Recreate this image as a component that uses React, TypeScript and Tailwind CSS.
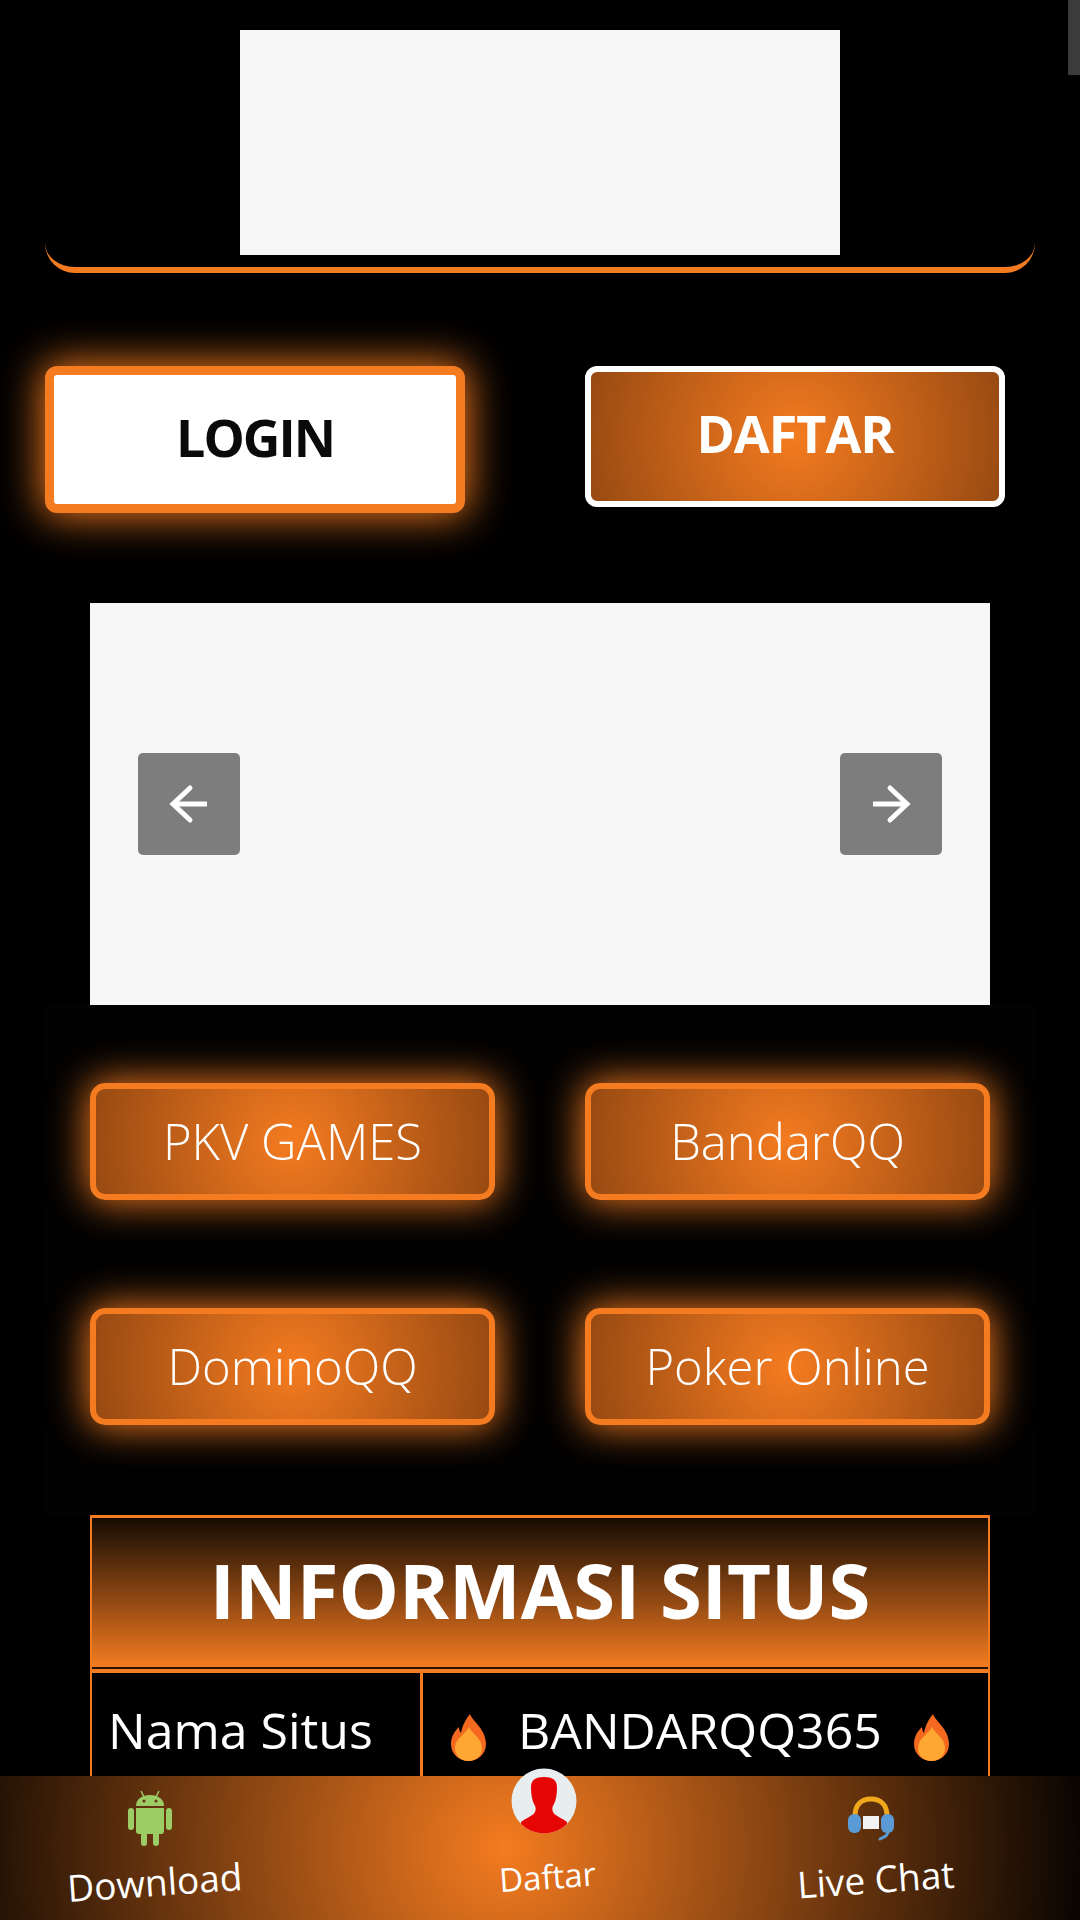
const GAMES = ["PKV GAMES", "BandarQQ", "DominoQQ", "Poker Online"];

const ArrowIcon = ({ flip = false }: { flip?: boolean }) => (
  <svg width="40" height="40" viewBox="0 0 40 40" fill="none" stroke="#fff" strokeWidth="5" className={flip ? "rotate-180" : ""}>
    <path d="M38 20H5" />
    <path d="M21 4L4 20l17 16" strokeLinecap="round" />
  </svg>
);

const Flame = () => (
  <svg width="35" height="47" viewBox="0 0 35 47" className="shrink-0">
    <path d="M19 0C21 7 35 15 35 30 35 40 27 47 17.500 47 8 47 0 40 0 30 0 22 4 17 8 13 8 16 9 18 10 19 11 12 15 5 19 0Z" fill="#f4691f" />
    <path d="M18 13C21 20 31 24 31 34 31 42 25 47 17.500 47 10 47 4 42 4 34 4 24 15 20 18 13Z" fill="#ffa733" />
  </svg>
);

const AndroidIcon = () => (
  <svg width="44" height="56" viewBox="0 0 44 56" fill="#9ccc65">
    <path d="M13 1l3 6M31 1l-3 6" stroke="#9ccc65" strokeWidth="1.5" />
    <path d="M8 16C8 9 14 5 22 5s14 4 14 11z" />
    <circle cx="16" cy="11" r="1.6" fill="#6b3a12" />
    <circle cx="28" cy="11" r="1.6" fill="#6b3a12" />
    <path d="M8 18h28v23a3 3 0 0 1-3 3H11a3 3 0 0 1-3-3z" />
    <rect x="0" y="18" width="6" height="22" rx="3" />
    <rect x="38" y="18" width="6" height="22" rx="3" />
    <rect x="13" y="42" width="6" height="14" rx="3" />
    <rect x="25" y="42" width="6" height="14" rx="3" />
  </svg>
);

const PersonIcon = () => (
  <svg width="66" height="66" viewBox="0 0 66 66">
    <circle cx="33" cy="33" r="32.5" fill="#e8eef0" />
    <clipPath id="person-clip">
      <circle cx="33" cy="33" r="32.5" />
    </clipPath>
    <path
      clipPath="url(#person-clip)"
      d="M33 9c10 0 13 4 13 11 0 6-1 12-3 16-2 3-2 6-1 8 2 4 9 6 14 10v14H10V54c5-4 12-6 14-10 1-2 1-5-1-8-2-4-3-10-3-16 0-7 3-11 13-11z"
      fill="#e60505"
    />
  </svg>
);

const HeadsetIcon = () => (
  <svg width="46" height="46" viewBox="0 0 46 46" fill="none">
    <path d="M7 20C7 9 13 3 23 3s16 6 16 17" stroke="#f0a81c" strokeWidth="5" />
    <rect x="0" y="18" width="13" height="19" rx="6" fill="#5b9bd5" />
    <rect x="33" y="18" width="13" height="19" rx="6" fill="#5b9bd5" />
    <rect x="15" y="20" width="16" height="13" fill="#f2f2f2" />
    <path d="M40 35c0 5-4 6-8 8" stroke="#5b9bd5" strokeWidth="3" strokeLinecap="round" />
  </svg>
);

export default function App() {
  return (
    <div className="relative h-[1920px] overflow-hidden bg-black font-['Open_Sans',sans-serif] text-white">
      <div className="absolute right-0 top-0 h-[75px] w-[12px] bg-[#3b3b3b]" />

      <header className="mx-[45px] flex h-[273px] justify-center rounded-b-[30px] border-b-[6px] border-[#f47b20] pt-[30px]">
        <div className="h-[225px] w-[600px] bg-[#f7f7f7]" />
      </header>

      <div className="mx-[45px] mt-[93px] flex items-start gap-[120px]">
        <a className="flex h-[147px] w-[420px] items-center justify-center rounded-[12px] border-[9px] border-[#f47b20] bg-white pb-[6px] text-[52px] font-bold tracking-[-2px] text-[#0a0a0a] shadow-[0_0_40px_3px_#f47b20]">
          LOGIN
        </a>
        <a className="flex h-[141px] w-[420px] items-center justify-center rounded-[12px] border-[6px] border-white bg-[radial-gradient(circle,#f47b20,#984a12)] pb-[8px] text-[52px] font-bold tracking-[-1px]">
          DAFTAR
        </a>
      </div>

      <div className="mx-[90px] mt-[90px] flex h-[402px] items-center justify-between bg-[#f7f7f7] px-[48px]">
        <button className="flex h-[102px] w-[102px] items-center justify-center rounded-[5px] bg-[#7d7d7d]">
          <ArrowIcon />
        </button>
        <button className="flex h-[102px] w-[102px] items-center justify-center rounded-[5px] bg-[#7d7d7d]">
          <ArrowIcon flip />
        </button>
      </div>

      <div className="mx-[45px] grid h-[510px] grid-cols-2 content-start gap-x-[90px] gap-y-[108px] bg-[#020202] px-[45px] pt-[78px]">
        {GAMES.map((name) => (
          <a
            key={name}
            className="flex h-[117px] items-center justify-center rounded-[15px] border-[6px] border-[#f47b20] bg-[radial-gradient(circle,#f47b20,#984a12)] text-[49px] font-light shadow-[0_0_38px_2px_#f47b20]"
          >
            {name}
          </a>
        ))}
      </div>

      <div className="mx-[90px] border-x-[2px] border-t-[3px] border-[#f47b20]">
        <div className="flex h-[151px] items-center justify-center border-b-[2px] border-[#241306] bg-[linear-gradient(#150b03,#f47b20)] pb-[5px] text-[76px] font-bold">
          INFORMASI SITUS
        </div>
        <div className="flex h-[200px] border-t-[4px] border-[#f47b20]">
          <div className="w-[331px] border-r-[3px] border-[#f47b20] pl-[16px] pt-[20px] text-[50px]">Nama Situs</div>
          <div className="flex flex-1 items-start gap-[32px] pl-[28px] pt-[20px] text-[50px]">
            <span className="mt-[21px]"><Flame /></span>
            <span>BANDARQQ365</span>
            <span className="mt-[21px]"><Flame /></span>
          </div>
        </div>
      </div>

      <nav className="absolute bottom-0 left-0 h-[144px] w-full bg-[radial-gradient(circle_at_505px_50%,#f47b20,#000_600px)]">
        <div className="absolute left-[128px] top-[14px]"><AndroidIcon /></div>
        <span className="absolute left-[67px] top-[78px] -rotate-[4deg] text-[37px]">Download</span>
        <div className="absolute left-[511px] top-[-8px]"><PersonIcon /></div>
        <span className="absolute left-[499px] top-[76px] -rotate-[4deg] text-[33px]">Daftar</span>
        <div className="absolute left-[848px] top-[20px]"><HeadsetIcon /></div>
        <span className="absolute left-[797px] top-[75px] -rotate-[4deg] text-[37px]">Live Chat</span>
      </nav>
    </div>
  );
}
